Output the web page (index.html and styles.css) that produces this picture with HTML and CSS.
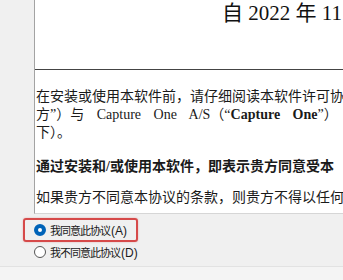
FILE: index.html
```html
<!DOCTYPE html>
<html lang="zh-CN">
  <head>
    <meta charset="UTF-8" />
    <meta name="viewport" content="width=device-width, initial-scale=1.0" />
    <title>许可协议</title>
    <link rel="stylesheet" href="styles.css">
  </head>
  <body>
    <div class="top">
      <div class="gutter"></div>
      <div class="license">
        <div class="license-head">自 2022 年 11</div>
        <div class="para">
          <div class="line">在安装或使用本软件前，请仔细阅读本软件许可协</div>
          <div class="line spread">方”）与 Capture One A/S（“<b>Capture One</b>”）</div>
          <div class="line">下）。</div>
        </div>
        <div class="para bold">
          <div class="line">通过安装和/或使用本软件，即表示贵方同意受本</div>
        </div>
        <div class="para">
          <div class="line">如果贵方不同意本协议的条款，则贵方不得以任何</div>
        </div>
      </div>
    </div>
    <div class="options">
      <label class="option highlight">
        <input type="radio" name="agree" checked />
        <span class="radio"></span>
        <span class="label">我同意此协议<i>(A)</i></span>
      </label>
      <label class="option">
        <input type="radio" name="agree" />
        <span class="radio"></span>
        <span class="label">我不同意此协议<i>(D)</i></span>
      </label>
    </div>
    <div class="footer"></div>
  </body>
</html>
```
FILE: styles.css
```css
body {
  margin: 0;
  width: 343px;
  height: 280px;
  overflow: hidden;
  background-color: #f0f0f0;
  font-family: "Liberation Serif", "Noto Sans CJK SC", serif;
  color: #1a1a1a;
}
.top {
  display: flex;
  height: 214px;
}
.gutter {
  width: 34px;
  flex-shrink: 0;
}
.license {
  flex: 1;
  min-width: 0;
  background-color: white;
  border-left: 1px solid #a3a3a3;
  border-bottom: 1px solid #d6d6d6;
  overflow: hidden;
}
.license-head {
  height: 69px;
  border-bottom: 1px solid #444;
  padding-left: 187px;
  font-size: 21px;
  line-height: 26px;
  white-space: nowrap;
  color: #111;
}
.para {
  margin-top: 18px;
  padding-left: 1px;
  font-size: 14px;
  line-height: 18px;
}
.para + .para {
  margin-top: 16px;
}
.para.bold + .para {
  margin-top: 13px;
}
.line {
  white-space: nowrap;
}
.spread {
  word-spacing: 9px;
}
.bold {
  font-weight: bold;
}
.options {
  height: 48px;
  padding: 4px 0 0 23px;
  font-family: "Noto Sans CJK SC", sans-serif;
  font-size: 11px;
}
.option {
  display: flex;
  align-items: center;
  width: fit-content;
  height: 19px;
  padding-left: 11px;
  cursor: pointer;
}
.option.highlight {
  height: 20px;
  padding: 0 9px;
  border: 2px solid #d64a4a;
  border-radius: 3px;
  box-shadow: 0 0 2px rgba(214, 74, 74, 0.4);
}
.option input {
  display: none;
}
.radio {
  width: 10px;
  height: 10px;
  border: 1px solid #555;
  border-radius: 50%;
  background-color: white;
  box-sizing: content-box;
}
.option input:checked + .radio {
  width: 4px;
  height: 4px;
  border: 4px solid #0063b8;
}
.label {
  margin-left: 4px;
  letter-spacing: -1px;
}
.label i {
  font-style: normal;
  font-family: "Liberation Sans", sans-serif;
  font-size: 12px;
  letter-spacing: 0;
  margin-left: 1px;
}
.footer {
  height: 13px;
  border-top: 1px solid #e2e2e2;
  background-color: #f4f4f4;
}
```
